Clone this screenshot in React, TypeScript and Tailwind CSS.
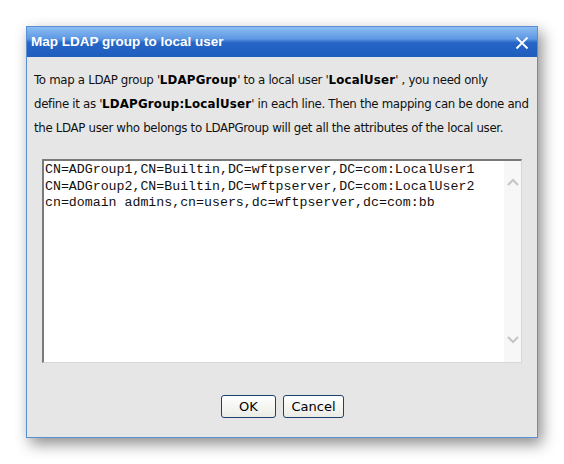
import React from 'react';

const App: React.FC = () => {
  const lines = [
    'CN=ADGroup1,CN=Builtin,DC=wftpserver,DC=com:LocalUser1',
    'CN=ADGroup2,CN=Builtin,DC=wftpserver,DC=com:LocalUser2',
    'cn=domain admins,cn=users,dc=wftpserver,dc=com:bb',
  ];

  return (
    <div className="w-[564px] h-[464px] bg-white pt-[26px] pl-[26px] font-['DejaVu_Sans',sans-serif]">
      {/* Dialog window */}
      <div className="w-[512px] h-[412px] flex flex-col border border-[#5b8fd4] bg-[#e6e6e6] shadow-[4px_6px_14px_rgba(0,0,0,0.45)]">
        {/* Title bar */}
        <div className="h-[30px] flex items-center justify-between pl-[4px] pr-[8px] bg-[linear-gradient(to_bottom,#8dbdf1_0%,#5d98e4_40%,#2766c6_52%,#1f5dbd_100%)]">
          <span className="text-white font-bold text-[13.5px] font-['Liberation_Sans',sans-serif]">Map LDAP group to local user</span>
          <svg width="14" height="14" viewBox="0 0 14 14" className="mt-[1px]">
            <path d="M1.5 1.5 L12.5 12.5 M12.5 1.5 L1.5 12.5" stroke="#fff" strokeWidth="1.8" />
          </svg>
        </div>

        {/* Body */}
        <div className="flex-1 flex flex-col px-[7px] pt-[11px]">
          <p className="text-[11.8px] leading-[24px] text-[#111] tracking-[-0.33px] whitespace-nowrap [&_b]:tracking-[0.2px] [&_b]:text-black">
            To map a LDAP group '<b>LDAPGroup</b>' to a local user '<b>LocalUser</b>' , you need only
            <br />
            define it as '<b>LDAPGroup:LocalUser</b>' in each line. Then the mapping can be done and
            <br />
            the LDAP user who belongs to LDAPGroup will get all the attributes of the local user.
          </p>

          {/* Text area */}
          <div className="mt-[19px] ml-[8px] w-[480px] h-[204px] flex border-t-2 border-l-2 border-[#7a7a7a] border-r border-b border-r-[#d8d8d8] border-b-[#d8d8d8] bg-white">
            <div className="flex-1 pl-[1px] pt-[1px] font-['Liberation_Mono',monospace] text-[13.25px] leading-[16.5px] text-[#111]">
              {lines.map((l) => (
                <div key={l} className="whitespace-pre">{l}</div>
              ))}
            </div>
            <div className="w-[17px] bg-[#f7f7f7] flex flex-col items-center justify-between pt-[17px] pb-[18px]">
              <svg width="12" height="8" viewBox="0 0 12 8">
                <path d="M1 7 L6 2 L11 7" stroke="#c6c6c6" strokeWidth="2.2" fill="none" />
              </svg>
              <svg width="12" height="8" viewBox="0 0 12 8">
                <path d="M1 1 L6 6 L11 1" stroke="#c6c6c6" strokeWidth="2.2" fill="none" />
              </svg>
            </div>
          </div>

          {/* Buttons */}
          <div className="flex justify-center gap-[7px] mt-[32px] pl-[1px]">
            <button className="w-[55px] h-[23px] rounded-[3px] border border-[#1f3f6c] bg-[linear-gradient(to_bottom,#ffffff,#ebebe6)] text-[13px] text-black">
              OK
            </button>
            <button className="w-[61px] h-[23px] rounded-[3px] border border-[#1f3f6c] bg-[linear-gradient(to_bottom,#ffffff,#ebebe6)] text-[13px] text-black">
              Cancel
            </button>
          </div>
        </div>
      </div>
    </div>
  );
};

export default App;
